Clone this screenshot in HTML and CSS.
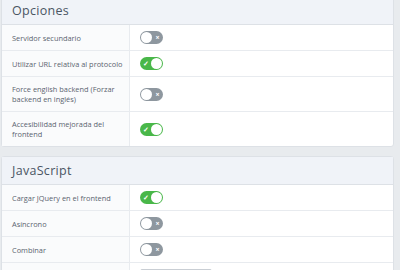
FILE: index.html
```html
<!DOCTYPE html>
<html lang="es">
<head>
    <meta charset="UTF-8">
    <meta name="viewport" content="width=device-width, initial-scale=1.0">
    <title>Opciones</title>
    <link rel="stylesheet" href="styles.css">
</head>
<body>
    <div class="page">
        <div class="panel">
            <div class="panel-header">Opciones</div>
            <div class="row">
                <div class="label">Servidor secundario</div>
                <div class="value"><span class="toggle off"><span class="knob"></span><span class="mark">&times;</span></span></div>
            </div>
            <div class="row">
                <div class="label">Utilizar URL relativa al protocolo</div>
                <div class="value"><span class="toggle on"><span class="mark">&#10003;</span><span class="knob"></span></span></div>
            </div>
            <div class="row">
                <div class="label">Force english backend (Forzar backend en inglés)</div>
                <div class="value"><span class="toggle off"><span class="knob"></span><span class="mark">&times;</span></span></div>
            </div>
            <div class="row">
                <div class="label">Accesibilidad mejorada del frontend</div>
                <div class="value"><span class="toggle on"><span class="mark">&#10003;</span><span class="knob"></span></span></div>
            </div>
        </div>

        <div class="panel">
            <div class="panel-header">JavaScript</div>
            <div class="row">
                <div class="label">Cargar JQuery en el frontend</div>
                <div class="value"><span class="toggle on"><span class="mark">&#10003;</span><span class="knob"></span></span></div>
            </div>
            <div class="row">
                <div class="label">Asíncrono</div>
                <div class="value"><span class="toggle off"><span class="knob"></span><span class="mark">&times;</span></span></div>
            </div>
            <div class="row">
                <div class="label">Combinar</div>
                <div class="value"><span class="toggle off"><span class="knob"></span><span class="mark">&times;</span></span></div>
            </div>
            <div class="row">
                <div class="label"></div>
                <div class="value"><input class="text-input" type="text"></div>
            </div>
        </div>
    </div>
</body>
</html>
```

FILE: styles.css
```css
body {
    margin: 0;
    background-color: #e8ebee;
    font-family: 'Open Sans', sans-serif;
    overflow: hidden;
}
.page {
    margin-top: -4px; /* page is scrolled a bit */
    padding: 0 6px 0 1px;
}
.panel {
    background: #fff;
    border: 1px solid #dde1e6;
    border-radius: 3px;
    margin-bottom: 9px;
}
.panel-header {
    background-color: #f0f3f8;
    color: #4a5563;
    font-size: 12.5px;
    height: 27px;
    line-height: 27px;
    padding-left: 10px;
    border-bottom: 1px solid #dde1e6;
    letter-spacing: 0.3px;
}
.row {
    display: grid;
    grid-template-columns: 128px 1fr;
    border-bottom: 1px solid #e8ebef;
}
.row:last-child {
    border-bottom: none;
}
.label {
    background-color: #fafbfc;
    border-right: 1px solid #e8ebef;
    color: #5b6470;
    font-size: 7.4px;
    line-height: 10px;
    padding: 7px 4px 7px 10px;
    min-height: 11px;
    display: flex;
    align-items: center;
}
.value {
    display: flex;
    align-items: center;
    padding-left: 10px;
}
.toggle {
    width: 23px;
    height: 13px;
    border-radius: 7px;
    display: flex;
    align-items: center;
    justify-content: space-between;
    padding: 0 1px;
    box-sizing: border-box;
    color: #fff;
    font-size: 7px;
    font-weight: bold;
}
.toggle.off {
    background-color: #8e979f;
}
.toggle.on {
    background-color: #49b749;
}
.knob {
    width: 11px;
    height: 11px;
    border-radius: 50%;
    background: #fff;
}
.mark {
    width: 9px;
    text-align: center;
    line-height: 11px;
}
.text-input {
    width: 72px;
    height: 14px;
    margin: 6px 0;
    border: 1px solid #c9ced4;
    border-radius: 2px;
    box-sizing: border-box;
}
```
